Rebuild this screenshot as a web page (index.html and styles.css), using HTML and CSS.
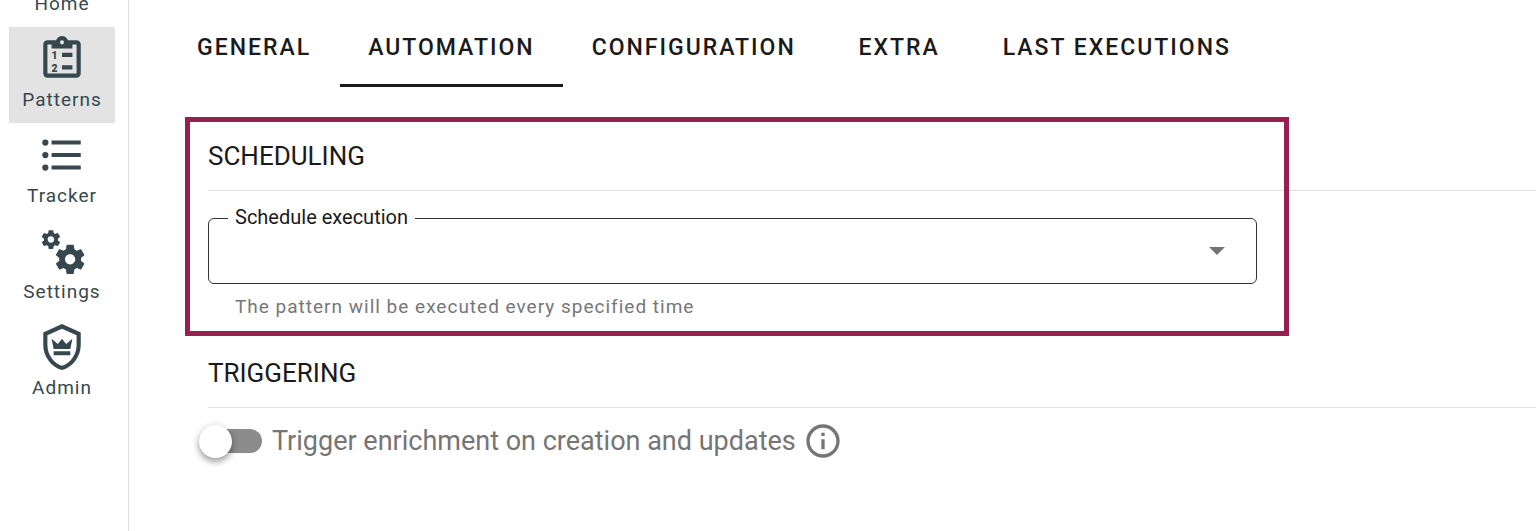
FILE: index.html
```html
<!DOCTYPE html>
<html lang="en">
<head>
    <meta charset="UTF-8">
    <meta name="viewport" content="width=device-width, initial-scale=1.0">
    <title>Patterns - Automation</title>
    <link rel="stylesheet" href="styles.css">
</head>
<body>

    <nav class="sidebar">
        <a class="nav-item" href="#home">
            <svg viewBox="0 0 24 24"><path d="M10,20V14H14V20H19V12H22L12,3L2,12H5V20H10Z"/></svg>
            <span>Home</span>
        </a>
        <a class="nav-item active" href="#patterns">
            <svg viewBox="0 0 24 24">
                <path d="M19,3H14.82C14.4,1.84 13.3,1 12,1C10.7,1 9.6,1.84 9.18,3H5A2,2 0 0,0 3,5V19A2,2 0 0,0 5,21H19A2,2 0 0,0 21,19V5A2,2 0 0,0 19,3M12,3A1,1 0 0,1 13,4A1,1 0 0,1 12,5A1,1 0 0,1 11,4A1,1 0 0,1 12,3M7,7H17V5H19V19H5V5H7V7M12,9V11H17V9H12M12,15V17H17V15H12Z"/>
                <text x="7" y="12">1</text>
                <text x="7" y="18">2</text>
            </svg>
            <span>Patterns</span>
        </a>
        <a class="nav-item" href="#tracker">
            <svg viewBox="0 0 24 24"><path d="M7,5H21V7H7V5M7,13V11H21V13H7M4,4.5A1.5,1.5 0 0,1 5.5,6A1.5,1.5 0 0,1 4,7.5A1.5,1.5 0 0,1 2.5,6A1.5,1.5 0 0,1 4,4.5M4,10.5A1.5,1.5 0 0,1 5.5,12A1.5,1.5 0 0,1 4,13.5A1.5,1.5 0 0,1 2.5,12A1.5,1.5 0 0,1 4,10.5M7,19V17H21V19H7M4,16.5A1.5,1.5 0 0,1 5.5,18A1.5,1.5 0 0,1 4,19.5A1.5,1.5 0 0,1 2.5,18A1.5,1.5 0 0,1 4,16.5Z"/></svg>
            <span>Tracker</span>
        </a>
        <a class="nav-item" href="#settings">
            <svg viewBox="0 0 24 24"><path d="M15.9,18.45C17.25,18.45 18.35,17.35 18.35,16C18.35,14.65 17.25,13.55 15.9,13.55C14.54,13.55 13.45,14.65 13.45,16C13.45,17.35 14.54,18.45 15.9,18.45M21.1,16.68L22.58,17.84C22.71,17.95 22.75,18.13 22.66,18.29L21.26,20.71C21.17,20.86 21,20.92 20.83,20.86L19.09,20.16C18.73,20.44 18.33,20.67 17.91,20.85L17.64,22.7C17.62,22.87 17.47,23 17.3,23H14.5C14.32,23 14.18,22.87 14.15,22.7L13.89,20.85C13.46,20.67 13.07,20.44 12.71,20.16L10.96,20.86C10.81,20.92 10.62,20.86 10.54,20.71L9.14,18.29C9.05,18.13 9.09,17.95 9.22,17.84L10.7,16.68L10.65,16L10.7,15.31L9.22,14.16C9.09,14.05 9.05,13.86 9.14,13.71L10.54,11.29C10.62,11.13 10.81,11.07 10.96,11.13L12.71,11.84C13.07,11.56 13.46,11.32 13.89,11.15L14.15,9.29C14.18,9.13 14.32,9 14.5,9H17.3C17.47,9 17.62,9.13 17.64,9.29L17.91,11.15C18.33,11.32 18.73,11.56 19.09,11.84L20.83,11.13C21,11.07 21.17,11.13 21.26,11.29L22.66,13.71C22.75,13.86 22.71,14.05 22.58,14.16L21.1,15.31L21.15,16L21.1,16.68M6.69,8.07C7.56,8.07 8.26,7.37 8.26,6.5C8.26,5.63 7.56,4.92 6.69,4.92A1.58,1.58 0 0,0 5.11,6.5C5.11,7.37 5.82,8.07 6.69,8.07M10.03,6.94L11,7.68C11.07,7.75 11.09,7.87 11.03,7.97L10.13,9.53C10.08,9.63 9.96,9.67 9.86,9.63L8.74,9.18L8,9.62L7.81,10.81C7.79,10.92 7.7,11 7.59,11H5.79C5.67,11 5.58,10.92 5.56,10.81L5.4,9.62L4.64,9.18L3.5,9.63C3.41,9.67 3.3,9.63 3.24,9.53L2.34,7.97C2.28,7.87 2.31,7.75 2.39,7.68L3.34,6.94L3.31,6.5L3.34,6.06L2.39,5.32C2.31,5.25 2.28,5.13 2.34,5.03L3.24,3.47C3.3,3.37 3.41,3.33 3.5,3.37L4.63,3.82L5.4,3.38L5.56,2.19C5.58,2.08 5.67,2 5.79,2H7.59C7.7,2 7.79,2.08 7.81,2.19L8,3.38L8.74,3.82L9.86,3.37C9.96,3.33 10.08,3.37 10.13,3.47L11.03,5.03C11.09,5.13 11.07,5.25 11,5.32L10.03,6.06L10.06,6.5L10.03,6.94Z"/></svg>
            <span>Settings</span>
        </a>
        <a class="nav-item" href="#admin">
            <svg viewBox="0 0 24 24"><path d="M21,11C21,16.55 17.16,21.74 12,23C6.84,21.74 3,16.55 3,11V5L12,1L21,5V11M12,21C15.75,20 19,15.54 19,11.22V6.3L12,3.18L5,6.3V11.22C5,15.54 8.25,20 12,21M17,8L16,13H8L7,8L10,10.5L12,8L14,10.5L17,8M8,14H16V16H8V14Z"/></svg>
            <span>Admin</span>
        </a>
    </nav>

    <main class="content">
        <div class="tabs" role="tablist">
            <button class="tab" role="tab">GENERAL</button>
            <button class="tab selected" role="tab" aria-selected="true">AUTOMATION</button>
            <button class="tab" role="tab">CONFIGURATION</button>
            <button class="tab" role="tab">EXTRA</button>
            <button class="tab" role="tab">LAST EXECUTIONS</button>
        </div>

        <section class="section scheduling">
            <h2>SCHEDULING</h2>
            <div class="field">
                <label for="schedule">Schedule execution</label>
                <select id="schedule" aria-describedby="schedule-hint">
                    <option value=""></option>
                </select>
                <svg class="arrow" viewBox="0 0 16 8"><path d="M0,0H16L8,8Z"/></svg>
            </div>
            <p class="hint" id="schedule-hint">The pattern will be executed every specified time</p>
            <div class="highlight"></div>
        </section>

        <section class="section">
            <h2>TRIGGERING</h2>
            <div class="toggle-row">
                <input type="checkbox" class="toggle" id="trigger">
                <label for="trigger">Trigger enrichment on creation and updates</label>
                <svg class="info" viewBox="0 0 24 24"><path d="M11,9H13V7H11M12,20C7.59,20 4,16.41 4,12C4,7.59 7.59,4 12,4C16.41,4 20,7.59 20,12C20,16.41 16.41,20 12,20M12,2A10,10 0 0,0 2,12A10,10 0 0,0 12,22A10,10 0 0,0 22,12A10,10 0 0,0 12,2M11,17H13V11H11V17Z"/></svg>
            </div>
        </section>
    </main>

</body>
</html>
```
FILE: styles.css
```css
* {
    box-sizing: border-box;
}

body {
    margin: 0;
    display: flex;
    height: 100vh;
    overflow: hidden;
    font-family: Roboto, 'Liberation Sans', sans-serif;
    background-color: #fff;
    color: #1a1a1a;
}

/* sidebar, scrolled past the first icon */
.sidebar {
    flex: none;
    width: 129px;
    padding: 0 13px 0 9px;
    border-right: 1px solid #e0e0e0;
}

.nav-item {
    display: flex;
    flex-direction: column;
    align-items: center;
    gap: 4px;
    height: 96px;
    padding-top: 7px;
    color: #37474f;
    font-size: 19px;
    line-height: 24px;
    letter-spacing: 1px;
    text-decoration: none;
}

.nav-item:first-child {
    margin-top: -69px;
}

.nav-item.active {
    background-color: #e3e3e3;
}

.nav-item svg {
    width: 50px;
    height: 50px;
    fill: currentColor;
}

.nav-item text {
    font-size: 5px;
    font-weight: 900;
    letter-spacing: 0;
}

.content {
    flex: 1;
    min-width: 0;
    padding-left: 40px;
}

.tabs {
    display: flex;
    gap: 1px;
    height: 87px;
}

.tab {
    min-width: 149px;
    padding: 10px 28px 0;
    border: none;
    border-bottom: 3px solid transparent;
    background: none;
    color: #1a1a1a;
    font-family: inherit;
    font-size: 23px;
    font-weight: 500;
    letter-spacing: 2px;
    cursor: pointer;
}

.tab.selected {
    border-bottom-color: #1a1a1a;
}

.section {
    position: relative;
    margin-left: 39px;
}

.scheduling {
    padding-top: 53px;
    margin-bottom: 38px;
}

.section h2 {
    margin: 0;
    padding-bottom: 18px;
    border-bottom: 1px solid #e0e0e0;
    font-size: 26px;
    font-weight: 400;
    line-height: 32px;
}

.field {
    position: relative;
    width: 79%;
    margin-top: 27px;
}

.field label {
    position: absolute;
    top: -13px;
    left: 20px;
    padding: 0 7px;
    background-color: #fff;
    font-size: 20px;
    line-height: 24px;
}

.field select {
    display: block;
    width: 100%;
    height: 66px;
    padding: 0 27px;
    border: 1px solid #333;
    border-radius: 6px;
    background: none;
    font-size: 26px;
    appearance: none;
}

.arrow {
    position: absolute;
    top: 29px;
    right: 32px;
    width: 16px;
    height: 8px;
    fill: #757575;
    pointer-events: none;
}

.hint {
    margin: 11px 0 0 27px;
    color: #777;
    font-size: 19px;
    line-height: 24px;
    letter-spacing: 1px;
}

/* frame around the scheduling settings */
.highlight {
    position: absolute;
    top: 30px;
    right: 247px;
    bottom: -17px;
    left: -23px;
    border: 5px solid #96214e;
    pointer-events: none;
}

.toggle-row {
    display: flex;
    align-items: center;
    margin-left: -9px;
    padding-top: 13px;
    color: #757575;
    font-size: 27px;
    line-height: 40px;
}

.toggle {
    position: relative;
    width: 56px;
    height: 24px;
    margin: 0 10px 0 7px;
    border-radius: 12px;
    background-color: #8c8c8c;
    appearance: none;
    cursor: pointer;
}

.toggle::before {
    content: "";
    position: absolute;
    top: -4px;
    left: -7px;
    width: 33px;
    height: 33px;
    border-radius: 50%;
    background-color: #fff;
    box-shadow: 0 4px 6px rgba(0, 0, 0, 0.3), 0 1px 8px rgba(0, 0, 0, 0.15);
}

.toggle:checked::before {
    left: 30px;
}

.info {
    width: 40px;
    height: 40px;
    margin-left: 7px;
    fill: #757575;
}
```
